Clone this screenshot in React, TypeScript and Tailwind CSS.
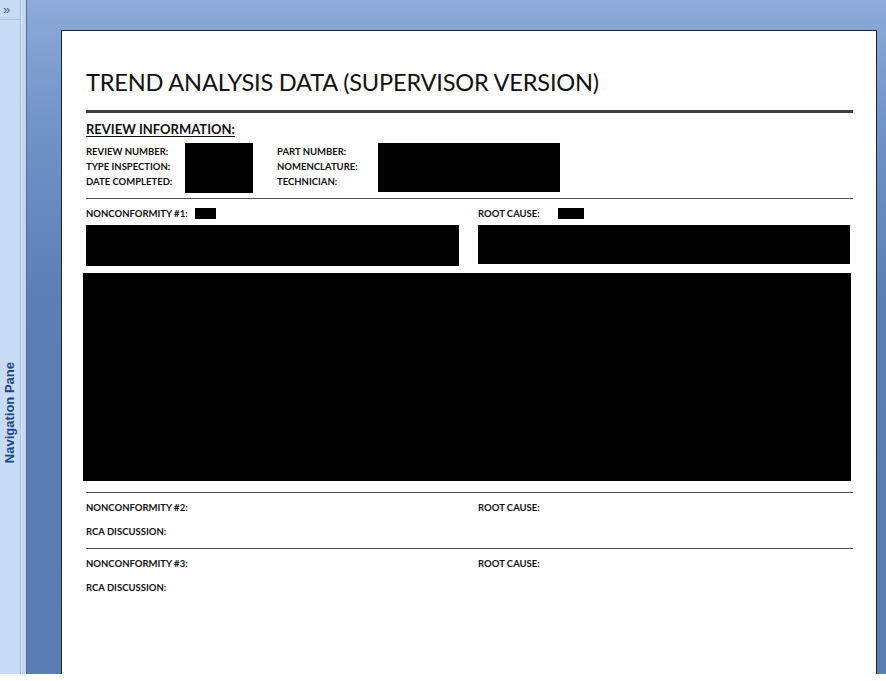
export default function App() {
  const base = "text-[9.5px] font-bold text-[#111] whitespace-nowrap";
  const label = `${base} leading-[15px]`;
  const tight = `${base} leading-[11px]`;
  return (
    <div className="w-[886px] h-[681px] flex flex-col bg-white overflow-hidden" style={{ fontFamily: 'Lato, "Open Sans", sans-serif' }}>
      <div className="flex h-[674px] overflow-hidden">
        {/* navigation pane (collapsed) */}
        <div className="flex w-[26px] shrink-0">
          <div className="w-[21px] bg-[#c8dcf6] border-r border-[#9dbbe3] flex flex-col">
            <div className="h-[20px] border-b border-[#a9c5ea] flex items-center pl-[3px] text-[13px] leading-none text-[#3d5f93]" style={{ fontFamily: '"Liberation Sans", sans-serif' }}>
              »
            </div>
            <div className="flex justify-center pt-[342px]">
              <span
                className="[writing-mode:vertical-rl] rotate-180 text-[13px] font-bold text-[#1c4587] whitespace-nowrap"
                style={{ fontFamily: '"Liberation Sans", sans-serif' }}
              >
                Navigation Pane
              </span>
            </div>
          </div>
          <div className="w-[1px] bg-[#e6effb]" />
          <div className="w-[4px] bg-[#c2d7f3]" />
        </div>

        {/* preview area */}
        <div className="flex-1 flex pl-[34px] pt-[30px] pr-[9px] border-l border-[#4b6ea4] bg-[linear-gradient(to_bottom,#8daad8_0%,#7394c9_18%,#5c7eb5_45%,#5a7cb3_100%)]">
          <div className="flex-1 bg-white border-x border-t border-[#1b2334] flex flex-col pl-[24px] pr-[23px] pt-[36px] text-[#111]">
            <h1 className="text-[23.6px] leading-[30px] font-normal text-[#111] tracking-[-0.2px] whitespace-nowrap">
              TREND ANALYSIS DATA (SUPERVISOR VERSION)
            </h1>
            <div className="mt-[13px] h-[3px] bg-[#404040]" />

            <div className="mt-[8px] text-[13px] leading-[16px] font-bold underline underline-offset-2 decoration-1">
              REVIEW INFORMATION:
            </div>

            <div className="mt-[6px] flex items-start">
              <div className="w-[99px] pt-[1px] flex flex-col">
                <span className={label}>REVIEW NUMBER:</span>
                <span className={label}>TYPE INSPECTION:</span>
                <span className={label}>DATE COMPLETED:</span>
              </div>
              <div className="w-[68px] h-[50px] bg-black" />
              <div className="ml-[24px] w-[101px] pt-[1px] flex flex-col">
                <span className={label}>PART NUMBER:</span>
                <span className={label}>NOMENCLATURE:</span>
                <span className={label}>TECHNICIAN:</span>
              </div>
              <div className="w-[182px] h-[49px] bg-black" />
            </div>

            <div className="mt-[5px] h-px bg-[#505050]" />

            <div className="mt-[9px] flex items-center h-[11px]">
              <div className="w-[392px] flex items-center">
                <span className={`${tight} w-[109px]`}>NONCONFORMITY #1:</span>
                <div className="w-[21px] h-[11px] bg-black" />
              </div>
              <span className={`${tight} w-[80px]`}>ROOT CAUSE:</span>
              <div className="w-[26px] h-[11px] bg-black" />
            </div>

            <div className="mt-[6px] flex items-start gap-[19px]">
              <div className="w-[373px] h-[41px] bg-black" />
              <div className="w-[372px] h-[39px] bg-black" />
            </div>

            <div className="mt-[7px] -ml-[3px] w-[768px] h-[208px] bg-black" />

            <div className="mt-[11px] h-px bg-[#505050]" />
            <div className="mt-[7px] flex">
              <span className={`${label} w-[392px]`}>NONCONFORMITY #2:</span>
              <span className={label}>ROOT CAUSE:</span>
            </div>
            <span className={`${label} mt-[9px]`}>RCA DISCUSSION:</span>

            <div className="mt-[9px] h-px bg-[#505050]" />
            <div className="mt-[7px] flex">
              <span className={`${label} w-[392px]`}>NONCONFORMITY #3:</span>
              <span className={label}>ROOT CAUSE:</span>
            </div>
            <span className={`${label} mt-[9px]`}>RCA DISCUSSION:</span>
          </div>
        </div>
      </div>
      <div className="h-[7px] bg-white" />
    </div>
  );
}
